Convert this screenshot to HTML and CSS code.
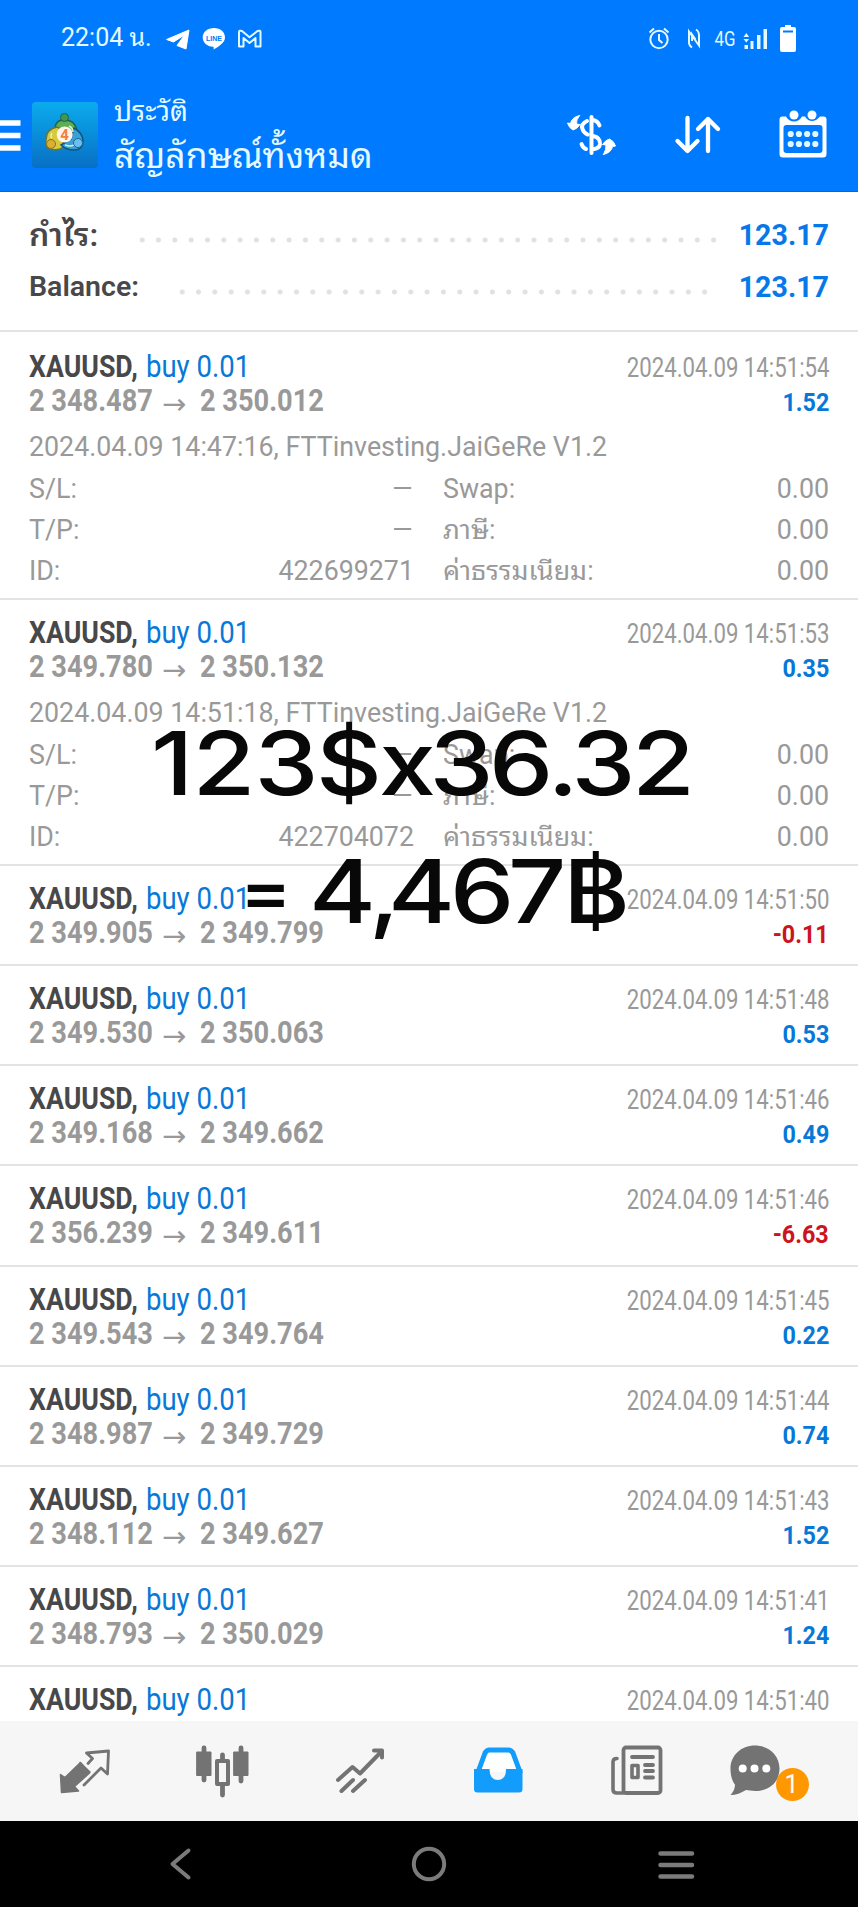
FILE: index.html
```
<!DOCTYPE html>
<html lang="th">
<head>
<meta charset="utf-8">
<title>ประวัติ</title>
<link rel="stylesheet" href="styles.css">
</head>
<body>
<div class="screen">
  <header class="top">
    <div class="status">
      <span class="clock">22:04 น.</span>
      <svg class="status-left" width="96" height="24" viewBox="166 27 96 24">
        <path d="M166.500 39.500 189 30 186 49 177 45.500 184.500 35 173.500 42Z" fill="#fff" stroke="#fff" stroke-linejoin="round"/>
        <path d="M214 28c6.500 0 11 4 11 9.400 0 5-5.500 8.600-11.500 12.100.4-1.500.4-2.400-.5-2.700-6-.5-10.300-4.400-10.300-9.400 0-5.400 4.800-9.400 11.300-9.400Z" fill="#fff"/>
        <text class="line-word" x="206" y="40.500" textLength="16">LINE</text>
        <path d="M239 32q0-2 3-1l7.500 6.300L257.500 31q3-1 3 1V46.500h-5V38l-6 5-6-5v8.500h-4.500Z" fill="none" stroke="#e4f8ff" stroke-width="2" stroke-linejoin="round"/>
      </svg>
      <svg class="status-right" width="150" height="30" viewBox="648 24 150 30" fill="none" stroke="#e4f8ff" stroke-width="2">
        <circle cx="660" cy="39.500" r="8.700"/><path d="M660 34v6l3.500 3M650.500 32.500l4.500-4M665 28.500l4.500 4"/>
        <path d="M693 47.500q-3.500-2-3-7V31.500L700 45.500V37.500q.5-6-3-8M693 41V34.500l3.500 5"/>
        <text class="network" x="715.500" y="45.500" textLength="21" lengthAdjust="spacingAndGlyphs">4G</text>
        <g fill="#e4f8ff" stroke="none"><path d="M744.500 37l2.800-4 2.800 4zM744.500 39l2.800 3.500 2.800-3.500zM745.500 45h3.500v4h-3.500zM751.500 41h3v8h-3zM758 35h3.500v14H758zM764.500 29h3.500v20h-3.500z"/></g>
        <path d="M786 25h6v2h3q2 0 2 2v21q0 2-2 2h-12q-2 0-2-2V29q0-2 2-2h3z" fill="#fff" stroke="none"/>
        <path d="M784 31.500h10" stroke="#007bff"/>
      </svg>
    </div>
    <div class="toolbar">
      <svg class="menu" width="21" height="32" viewBox="0 0 21 32"><path d="M0 3h20.500M0 15.500h20.500M0 28h20.500" stroke="#fff" stroke-width="5.500"/></svg>
      <svg class="logo" width="66" height="66" viewBox="0 0 66 66">
        <defs><linearGradient id="sky" x2="0" y2="1"><stop stop-color="#0babee"/><stop offset="1" stop-color="#086fc4"/></linearGradient></defs>
        <rect width="66" height="66" rx="4" fill="url(#sky)"/>
        <path d="M23 30q-1-12 9-12 12 0 13 12l-4 5H27Z" fill="#5fae57" stroke="#1f6247" stroke-width="1.500"/>
        <path d="M25 25q-11 2-11 13-2 9 6 9.500 8 1.500 12-3.500l-3-17Z" fill="#d9c93b" stroke="#6a7434" stroke-width="1.500"/>
        <path d="M42 26q9 5 9 13 0 9-9 9-8 0-13-5l10-6Z" fill="#3aa0d8" stroke="#105582" stroke-width="1.500"/>
        <path d="M37 24q4 2 4 6M20 31q-2 3 0 5M33 43q5 2 9 0" fill="none" stroke="#d8f3c6" stroke-width="1.500"/>
        <circle cx="32.500" cy="15.500" r="4" fill="#3f9851" stroke="#1f6247"/><circle cx="19" cy="42" r="4.500" fill="#dcae31" stroke="#7d7430"/><circle cx="46" cy="41" r="4.500" fill="#6cc0f0" stroke="#1b6a9c"/>
        <circle cx="32.700" cy="32.500" r="8" fill="#fff5ec"/>
        <text class="logo-digit" x="28.300" y="38">4</text>
      </svg>
      <div class="titles"><div class="title-small">ประวัติ</div><div class="title-big">สัญลักษณ์ทั้งหมด</div></div>
      <svg class="actions" width="264" height="52" viewBox="566 108 264 52" fill="none" stroke="#fff" stroke-linecap="round" stroke-linejoin="round">
        <g stroke-width="4"><path d="M592.500 117v36M600.500 125.500q-2-5-6.500-5.500M588 121q-6.500 3-4.500 8 1 3.500 5 5.500M594 136q7.500 1.500 7 8-.5 4-5.500 5M582.500 144q1.500 4 4.500 5"/></g>
        <g fill="#fff" stroke-width="1"><path d="M580.500 115.500q-8 2-9 8l-3-.5q1.500 5 5.500 7 4-1 7-5.500l-3.500-.5q-.5-4 3-8.500Z"/><path d="M604.500 154.500q8-2 9-8l3-.5q-1.500-5-6-7-4 1-7 5.500l3.500.5q.5 4-2.500 9.500Z"/></g>
        <path d="M688.500 118v32M678.500 141l10 10 10-10M709 151V119M699 129l10-10 10 10" stroke-width="4.300"/>
        <path d="M787 116.500q3 5 8 5t8-5h3q3 4.500 7 4.500t8-4.500h3.500q3 0 3 3V154q0 3.500-3.500 3.500h-40q-3.500 0-3.500-3.500V119.500q0-3 3-3Z" fill="#fff" stroke="none"/>
        <rect x="784.500" y="125" width="39" height="28" rx="3" fill="#007bff" stroke="none"/>
        <circle cx="795" cy="115" r="4.500" fill="#fff" stroke="none"/><circle cx="813" cy="115" r="4.500" fill="#fff" stroke="none"/>
        <path d="M791.700 134h.01M799.900 134h.01M808.100 134h.01M816.300 134h.01M791.700 144h.01M799.900 144h.01M808.100 144h.01M816.300 144h.01" stroke="#dff8ff" stroke-width="6.200"/>
      </svg>
    </div>
  </header>

  <main class="list">
    <section class="summary">
      <div class="sum"><span class="sum-label thai">กำไร:</span><i class="dots dots-a"></i><b class="sum-value">123.17</b></div>
      <div class="sum"><span class="sum-label">Balance:</span><i class="dots dots-b"></i><b class="sum-value">123.17</b></div>
    </section>

    <article class="deal first">
      <div class="line"><b class="symbol">XAUUSD,</b><span class="side">buy 0.01</span><time class="date">2024.04.09 14:51:54</time></div>
      <div class="line"><b class="price">2 348.487</b><span class="arrow">→</span><b class="price">2 350.012</b><b class="profit">1.52</b></div>
      <div class="details">
        <div class="note">2024.04.09 14:47:16, FTTinvesting.JaiGeRe V1.2</div>
        <div class="cells"><span>S/L:</span><span class="num dash">–</span><span>Swap:</span><span class="num">0.00</span>
        <span>T/P:</span><span class="num dash">–</span><span class="th">ภาษี:</span><span class="num">0.00</span>
        <span>ID:</span><span class="num">422699271</span><span class="th">ค่าธรรมเนียม:</span><span class="num">0.00</span></div>
      </div>
    </article>
    <article class="deal open">
      <div class="line"><b class="symbol">XAUUSD,</b><span class="side">buy 0.01</span><time class="date">2024.04.09 14:51:53</time></div>
      <div class="line"><b class="price">2 349.780</b><span class="arrow">→</span><b class="price">2 350.132</b><b class="profit">0.35</b></div>
      <div class="details">
        <div class="note">2024.04.09 14:51:18, FTTinvesting.JaiGeRe V1.2</div>
        <div class="cells"><span>S/L:</span><span class="num dash">–</span><span>Swap:</span><span class="num">0.00</span>
        <span>T/P:</span><span class="num dash">–</span><span class="th">ภาษี:</span><span class="num">0.00</span>
        <span>ID:</span><span class="num">422704072</span><span class="th">ค่าธรรมเนียม:</span><span class="num">0.00</span></div>
      </div>
    </article>
    <article class="deal">
      <div class="line"><b class="symbol">XAUUSD,</b><span class="side">buy 0.01</span><time class="date">2024.04.09 14:51:50</time></div>
      <div class="line"><b class="price">2 349.905</b><span class="arrow">→</span><b class="price">2 349.799</b><b class="profit loss">-0.11</b></div>
    </article>
    <article class="deal">
      <div class="line"><b class="symbol">XAUUSD,</b><span class="side">buy 0.01</span><time class="date">2024.04.09 14:51:48</time></div>
      <div class="line"><b class="price">2 349.530</b><span class="arrow">→</span><b class="price">2 350.063</b><b class="profit">0.53</b></div>
    </article>
    <article class="deal">
      <div class="line"><b class="symbol">XAUUSD,</b><span class="side">buy 0.01</span><time class="date">2024.04.09 14:51:46</time></div>
      <div class="line"><b class="price">2 349.168</b><span class="arrow">→</span><b class="price">2 349.662</b><b class="profit">0.49</b></div>
    </article>
    <article class="deal">
      <div class="line"><b class="symbol">XAUUSD,</b><span class="side">buy 0.01</span><time class="date">2024.04.09 14:51:46</time></div>
      <div class="line"><b class="price">2 356.239</b><span class="arrow">→</span><b class="price">2 349.611</b><b class="profit loss">-6.63</b></div>
    </article>
    <article class="deal">
      <div class="line"><b class="symbol">XAUUSD,</b><span class="side">buy 0.01</span><time class="date">2024.04.09 14:51:45</time></div>
      <div class="line"><b class="price">2 349.543</b><span class="arrow">→</span><b class="price">2 349.764</b><b class="profit">0.22</b></div>
    </article>
    <article class="deal">
      <div class="line"><b class="symbol">XAUUSD,</b><span class="side">buy 0.01</span><time class="date">2024.04.09 14:51:44</time></div>
      <div class="line"><b class="price">2 348.987</b><span class="arrow">→</span><b class="price">2 349.729</b><b class="profit">0.74</b></div>
    </article>
    <article class="deal">
      <div class="line"><b class="symbol">XAUUSD,</b><span class="side">buy 0.01</span><time class="date">2024.04.09 14:51:43</time></div>
      <div class="line"><b class="price">2 348.112</b><span class="arrow">→</span><b class="price">2 349.627</b><b class="profit">1.52</b></div>
    </article>
    <article class="deal">
      <div class="line"><b class="symbol">XAUUSD,</b><span class="side">buy 0.01</span><time class="date">2024.04.09 14:51:41</time></div>
      <div class="line"><b class="price">2 348.793</b><span class="arrow">→</span><b class="price">2 350.029</b><b class="profit">1.24</b></div>
    </article>
    <article class="deal">
      <div class="line"><b class="symbol">XAUUSD,</b><span class="side">buy 0.01</span><time class="date">2024.04.09 14:51:40</time></div>
    </article>
  </main>

  <nav class="tabs">
    <svg width="858" height="100" viewBox="0 1721 858 100" fill="none" stroke="#737373" stroke-linecap="round" stroke-linejoin="round">
      <path d="M80 1762.500 90 1772 89 1773.500 74.500 1786.500 78.500 1791 61.500 1792.500 60.500 1774.500 65 1777.500 80.500 1762.500 89 1771.500Z" fill="#737373" stroke-width="1.500"/>
      <path d="M88 1763.500 92.500 1758.500 86.500 1753 108.500 1751 107.500 1774 101 1768 84 1785" stroke-width="2.800"/>
      <path d="M204 1748v32M222.500 1755v40M241 1748v33" stroke-width="4.800"/><path d="M197 1752h14v23.500h-14zM234 1752h14v23.500h-14z" fill="#737373" stroke-width="1"/>
      <rect x="217" y="1761" width="11" height="23" fill="#f6f6f6" stroke-width="4"/>
      <path d="M338 1780 352.500 1767 360 1773.500 381 1752M374 1750.500h8v7M341.500 1791 353 1780M353 1791l12-11" stroke-width="4"/>
      <path d="M478 1772 485 1753Q487 1750 489 1750H508.500Q511 1750 513 1753L520 1772" fill="#fdfefe" stroke="#129cfb" stroke-width="5"/>
      <path d="M474 1769h15.500q0 11 8.300 11t8.300-11H522.500V1789q0 3.500-3.500 3.500H477.500q-3.500 0-3.500-3.500Z" fill="#129cfb" stroke="none"/>
      <rect x="623.500" y="1747.500" width="37" height="45.500" rx="2.500" stroke-width="3.800"/>
      <path d="M617 1758.500q-4 0-4 3.500v27.500q0 3.500 4 3.500h7" stroke-width="3.600"/><path d="M632 1757h21M645 1765h8M645 1771h8M645 1777.500h8" stroke-width="3.800"/><path d="M632 1765.500h6v12h-6z" stroke-width="3.600"/>
      <path d="M755 1745.500c14 0 24.500 10 24.500 23S770 1791 755.500 1791c-4 0-7-.8-9.500-1-5 3-10 5-15.500 5 3-3 4.500-7 4.500-10.500-3-3.500-4.500-9-4.500-16 0-13 10.500-23 24.500-23Z" fill="#737373" stroke="none"/>
      <path d="M742.700 1768.500h.01M754.500 1768.500h.01M766.300 1768.500h.01" stroke="#fff" stroke-width="8"/>
      <circle cx="792.500" cy="1784.500" r="16.500" fill="#ff9800" stroke="none"/>
      <text class="badge" x="791.500" y="1793" text-anchor="middle" stroke="none">1</text>
    </svg>
  </nav>
  <footer class="system">
    <svg width="858" height="86" viewBox="0 1821 858 86" fill="none" stroke="#7b7b7b" stroke-width="4" stroke-linecap="round" stroke-linejoin="round">
      <path d="M188.500 1850.500 172.500 1864 188.500 1877.500"/><circle cx="429" cy="1864" r="15.200"/><path d="M660.500 1853.500h31.500M660.500 1865h31.500M660.500 1876.500h31.500" stroke-width="4.500"/>
    </svg>
  </footer>

  <svg class="caption" width="560" height="240" viewBox="140 710 560 240">
    <g transform="scale(1.16 1)">
      <text y="795" x="130.200 166 219.400 272.400 326.700 370.300 421.600 472 492.700 544.800">123$x36.32</text>
      <text><tspan class="equals" x="207" y="915">=</tspan> <tspan y="923" x="266.400 318 334.500 388 438 485.300">4,467฿</tspan></text>
    </g>
  </svg>
</div>
</body>
</html>
```
FILE: styles.css
```
* { box-sizing: border-box; }
body { margin: 0; font-family: Roboto, "Noto Sans Thai Looped", "Loma", "Waree", "Garuda", "Noto Sans Thai", "Noto Sans", sans-serif; }
.screen { position: relative; width: 858px; height: 1907px; display: flex; flex-direction: column; background: #fff; overflow: hidden; }
svg { display: block; flex: none; }

.top { height: 192px; flex: none; background: #007bff; border-bottom: 1px solid #0069d4; color: #e4faff; }
.status { height: 78px; display: flex; align-items: center; padding: 0 61px 0 61px; }
.clock { width: 105px; font-size: 25px; line-height: 30px; height: 32px; white-space: nowrap; }
.status-right { margin-left: auto; }
.line-word { font: 900 7px "Liberation Sans", sans-serif; fill: #007bff; }
.network { font: 20px Roboto, sans-serif; fill: #e4f8ff; stroke: none; }
.toolbar { display: flex; align-items: flex-start; padding: 20px 29px 0 0; }
.menu { margin-top: 22px; margin-right: 11px; }
.logo { margin-top: 4px; margin-right: 16px; }
.logo-digit { font: bold 15px Roboto, sans-serif; fill: #f0803c; }
.titles { flex: 1; white-space: nowrap; }
.title-small { font-size: 28px; line-height: 28px; height: 36px; }
.title-big { font-size: 35.400px; line-height: 44px; }
.actions { margin-top: 10px; }

.list { flex: 1; min-height: 0; overflow: hidden; }
.summary { height: 138px; padding: 17px 29px 0; }
.sum { height: 52px; display: flex; align-items: center; font-size: 28.500px; line-height: 52px; color: #48484a; }
.sum-label { font-weight: 600; white-space: nowrap; }
.thai { font-size: 32px; }
.sum-value { color: #0878e8; margin-left: auto; font-weight: 700; font-size: 28.600px; }
.dots { height: 6px; margin-left: auto; background: radial-gradient(circle at 50% 50%, #e1e1e1 0 2px, transparent 3px) 0 0 / 16.34px 6px repeat-x; position: relative; top: 5px; }
.dots-a { width: 588.2px; }
.dots-b { width: 539.2px; margin-right: 9px; }
.dots + .sum-value { margin-left: 0; width: 107px; text-align: right; }

.deal { height: 100.14px; padding: 15px 29px 0; border-top: 2px solid #e3e3e3; }
.deal.first { height: 268px; padding-top: 16.500px; }
.deal.open { height: 266px; }
.line { height: 34px; display: flex; align-items: baseline; line-height: 34px; white-space: nowrap; }
.symbol, .side, .price { font-size: 32px; transform-origin: 0 50%; }
.symbol { width: 117px; color: #48484a; transform: scaleX(.835); }
.side { width: 110px; color: #0878d8; transform: scaleX(.86); }
.date { margin-left: auto; font-size: 27px; color: #999; transform: scaleX(.822); transform-origin: 100% 50%; }
.price { width: 126px; color: #999; transform: scaleX(.85); }
.arrow { width: 45px; padding-left: 7px; font: 29px/34px "DejaVu Sans", sans-serif; color: #999; transform: translateY(3px); }
.profit { margin-left: auto; font-size: 26.500px; color: #0878d8; transform: scaleX(.88); transform-origin: 100% 50%; }
.loss { color: #cc1420; }
.details { margin-top: 10px; font-size: 26.800px; color: #999; }
.note { height: 42px; line-height: 40px; white-space: nowrap; }
.cells { display: grid; grid-template-columns: 60px 325px 230px 1fr; grid-auto-rows: 41px; line-height: 40px; }
.cells > :nth-child(4n+3) { padding-left: 29px; }
.cells span { white-space: nowrap; }
.num { text-align: right; }
.dash { transform: scaleX(1.3); transform-origin: 100% 50%; }

.tabs { height: 100px; flex: none; background: #f6f6f6; }
.badge { font: 25px Roboto, sans-serif; fill: #fff; }
.system { height: 86px; flex: none; background: #000; }
.caption { position: absolute; left: 140px; top: 710px; font: 450 88px Inter, sans-serif; fill: #080808; }
.equals { font-size: 66px; font-weight: 600; }
```
